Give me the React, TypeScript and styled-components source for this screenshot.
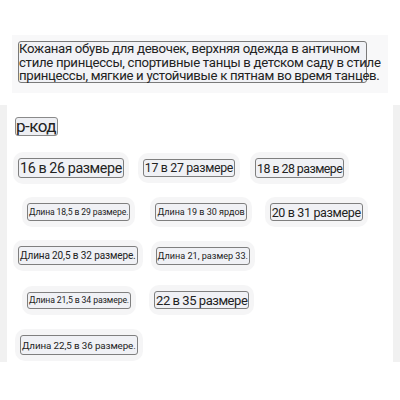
import React from 'react'
import styled, { createGlobalStyle } from 'styled-components'

const Global = createGlobalStyle`
  body {
    margin: 0;
    background: #ffffff;
    font-family: Roboto, 'Noto Sans', sans-serif;
    color: #222;
  }
`

const Page = styled.div`
  width: 400px;
  height: 400px;
  overflow: hidden;
  padding-top: 35px;
  box-sizing: border-box;
`

const Intro = styled.section`
  margin: 0 12px 0 12px;
  height: 58px;
  background: #f8f8f9;
  padding: 6px 0 0 6px;
  box-sizing: border-box;
`

const IntroText = styled.div`
  width: 349px;
  height: 42px;
  box-sizing: border-box;
  border: 1px solid #7a7a7a;
  border-radius: 3px;
  background: #f1f2f6;
  font-size: 13.2px;
  line-height: 13.5px;
  padding: 0;
  letter-spacing: -0.3px;
  white-space: nowrap;
`

const Sizes = styled.section`
  margin-top: 12px;
  height: 257px;
  border-left: 7px solid #f1f1f1;
  border-right: 7px solid #f1f1f1;
  box-sizing: border-box;
  padding-top: 12px;
`

const Code = styled.span`
  display: inline-block;
  margin-left: 8px;
  font-size: 17px;
  line-height: 16px;
  letter-spacing: -0.5px;
  padding: 0 1px 1px 0;
  border: 1px solid #8a8a8a;
  border-radius: 3px;
  background: #eeeff3;
`

const Row = styled.div<{ top: number }>`
  display: flex;
  align-items: center;
  margin-top: ${p => p.top}px;
`

const Pill = styled.div<{ left: number }>`
  background: #f5f5f6;
  border-radius: 10px;
  padding: 6px 5px;
  margin-left: ${p => p.left}px;
  display: flex;
  align-items: center;
`

const Tag = styled.span<{ size: number; h: number; ls: number }>`
  display: inline-flex;
  align-items: center;
  height: ${p => p.h}px;
  box-sizing: border-box;
  font-size: ${p => p.size}px;
  letter-spacing: ${p => p.ls}px;
  border: 1px solid #7f7f7f;
  border-radius: 3px;
  background: #f0f1f5;
  padding: 0 1px;
  white-space: nowrap;
`

type Item = { text: string; size: number; h: number; left: number; ls: number }

const rows: { top: number; items: Item[] }[] = [
  {
    top: 16,
    items: [
      { text: '16 в 26 размере', size: 14.3, h: 20, left: 6, ls: -0.4 },
      { text: '17 в 27 размере', size: 12.3, h: 18, left: 9, ls: -0.3 },
      { text: '18 в 28 размере', size: 12.4, h: 20, left: 10, ls: -0.55 },
    ],
  },
  {
    top: 13,
    items: [
      { text: 'Длина 18,5 в 29 размере.', size: 8.6, h: 18, left: 15, ls: -0.1 },
      { text: 'Длина 19 в 30 ярдов', size: 9, h: 18, left: 15, ls: 0 },
      { text: '20 в 31 размере', size: 12.5, h: 18, left: 13, ls: -0.35 },
    ],
  },
  {
    top: 13,
    items: [
      { text: 'Длина 20,5 в 32 размере.', size: 10, h: 19, left: 6, ls: -0.12 },
      { text: 'Длина 21, размер 33.', size: 9.1, h: 18, left: 8, ls: 0 },
    ],
  },
  {
    top: 14,
    items: [
      { text: 'Длина 21,5 в 34 размере.', size: 8.7, h: 17, left: 15, ls: -0.12 },
      { text: '22 в 35 размере', size: 13, h: 18, left: 13, ls: -0.45 },
    ],
  },
  {
    top: 14,
    items: [{ text: 'Длина 22,5 в 36 размере.', size: 9.8, h: 20, left: 8, ls: -0.1 }],
  },
]

const App = () => {
  return (
    <Page>
      <Global />
      <Intro>
        <IntroText>
          Кожаная обувь для девочек, верхняя одежда в античном
          <br />
          стиле принцессы, спортивные танцы в детском саду в стиле
          <br />
          принцессы, мягкие и устойчивые к пятнам во время танцев.
        </IntroText>
      </Intro>
      <Sizes>
        <Code>р-код</Code>
        {rows.map((row, i) => (
          <Row key={i} top={row.top}>
            {row.items.map(item => (
              <Pill key={item.text} left={item.left}>
                <Tag size={item.size} h={item.h} ls={item.ls}>
                  {item.text}
                </Tag>
              </Pill>
            ))}
          </Row>
        ))}
      </Sizes>
    </Page>
  )
}

export default App
